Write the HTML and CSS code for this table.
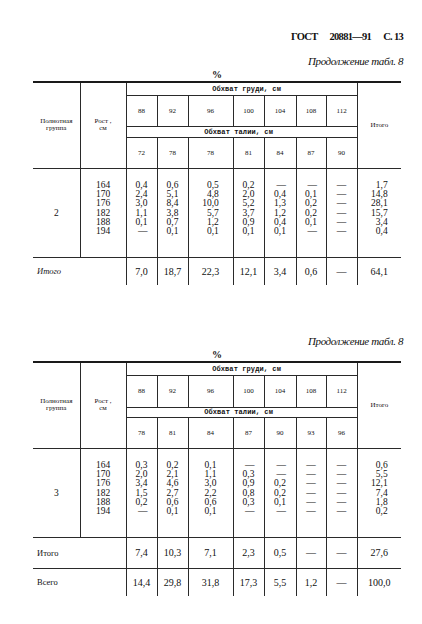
FILE: index.html
```html
<!DOCTYPE html>
<html lang="ru">
<head>
<meta charset="utf-8">
<title>ГОСТ 20881—91 С. 13</title>
<link rel="stylesheet" href="styles.css">
</head>
<body>
<div class="page">
  <div class="gost"><span>ГОСТ</span><span>20881—91</span><span>С. 13</span></div>
  <div class="cont">Продолжение табл. 8</div>
  <div class="pct">%</div>
  <table class="t t1">
    <colgroup>
      <col class="c47"><col class="c46"><col class="c31"><col class="c31"><col class="c45"><col class="c31"><col class="c32"><col class="c30"><col class="c31"><col class="c44">
    </colgroup>
    <tr class="hd ra">
      <td class="first lbl" rowspan="4">Полнотная<br>группа</td>
      <td class="lbl" rowspan="4">Рост ,<br>см</td>
      <td class="sp sp-b" colspan="7">Обхват груди, см</td>
      <td class="lbl" rowspan="4">Итого</td>
    </tr>
    <tr class="hd rb">
      <td class="hn">88</td><td class="hn">92</td><td class="hn">96</td><td class="hn">100</td><td class="hn">104</td><td class="hn">108</td><td class="hn">112</td>
    </tr>
    <tr class="hd rc">
      <td class="sp sp-w" colspan="7">Обхват талии, см</td>
    </tr>
    <tr class="hd rd">
      <td class="hn">72</td><td class="hn">78</td><td class="hn">78</td><td class="hn">81</td><td class="hn">84</td><td class="hn">87</td><td class="hn">90</td>
    </tr>
    <tr class="dt re">
      <td class="first grp">2</td>
      <td class="num"><div class="v">164<br>170<br>176<br>182<br>188<br>194</div></td>
      <td class="num"><div class="v">0,4<br>2,4<br>3,0<br>1,1<br>0,1<br>—</div></td>
      <td class="num"><div class="v">0,6<br>5,1<br>8,4<br>3,8<br>0,7<br>0,1</div></td>
      <td class="num"><div class="v">0,5<br>4,8<br>10,0<br>5,7<br>1,2<br>0,1</div></td>
      <td class="num"><div class="v">0,2<br>2,0<br>5,2<br>3,7<br>0,9<br>0,1</div></td>
      <td class="num"><div class="v">—<br>0,4<br>1,3<br>1,2<br>0,4<br>0,1</div></td>
      <td class="num"><div class="v">—<br>0,1<br>0,2<br>0,2<br>0,1<br>—</div></td>
      <td class="num"><div class="v">—<br>—<br>—<br>—<br>—<br>—</div></td>
      <td class="num"><div class="v">1,7<br>14,8<br>28,1<br>15,7<br>3,4<br>0,4</div></td>
    </tr>
    <tr class="tot rf">
      <td class="first tl it" colspan="2">Итого</td>
      <td class="tn">7,0</td><td class="tn">18,7</td><td class="tn">22,3</td><td class="tn">12,1</td><td class="tn">3,4</td><td class="tn">0,6</td><td class="tn">—</td><td class="tn">64,1</td>
    </tr>
  </table>

  <div class="cont second">Продолжение табл. 8</div>
  <div class="pct">%</div>
  <table class="t t2">
    <colgroup>
      <col class="c47"><col class="c46"><col class="c31"><col class="c31"><col class="c45"><col class="c31"><col class="c32"><col class="c30"><col class="c31"><col class="c44">
    </colgroup>
    <tr class="hd ra">
      <td class="first lbl" rowspan="4">Полнотная<br>группа</td>
      <td class="lbl" rowspan="4">Рост ,<br>см</td>
      <td class="sp sp-b" colspan="7">Обхват груди, см</td>
      <td class="lbl" rowspan="4">Итого</td>
    </tr>
    <tr class="hd rb2">
      <td class="hn">88</td><td class="hn">92</td><td class="hn">96</td><td class="hn">100</td><td class="hn">104</td><td class="hn">108</td><td class="hn">112</td>
    </tr>
    <tr class="hd rc2">
      <td class="sp sp-w" colspan="7">Обхват талии, см</td>
    </tr>
    <tr class="hd rd">
      <td class="hn">78</td><td class="hn">81</td><td class="hn">84</td><td class="hn">87</td><td class="hn">90</td><td class="hn">93</td><td class="hn">96</td>
    </tr>
    <tr class="dt re">
      <td class="first grp">3</td>
      <td class="num"><div class="v">164<br>170<br>176<br>182<br>188<br>194</div></td>
      <td class="num"><div class="v">0,3<br>2,0<br>3,4<br>1,5<br>0,2<br>—</div></td>
      <td class="num"><div class="v">0,2<br>2,1<br>4,6<br>2,7<br>0,6<br>0,1</div></td>
      <td class="num"><div class="v">0,1<br>1,1<br>3,0<br>2,2<br>0,6<br>0,1</div></td>
      <td class="num"><div class="v">—<br>0,3<br>0,9<br>0,8<br>0,3<br>—</div></td>
      <td class="num"><div class="v">—<br>—<br>0,2<br>0,2<br>0,1<br>—</div></td>
      <td class="num"><div class="v">—<br>—<br>—<br>—<br>—<br>—</div></td>
      <td class="num"><div class="v">—<br>—<br>—<br>—<br>—<br>—</div></td>
      <td class="num"><div class="v">0,6<br>5,5<br>12,1<br>7,4<br>1,8<br>0,2</div></td>
    </tr>
    <tr class="tot dt rg">
      <td class="first tl" colspan="2">Итого</td>
      <td class="tn">7,4</td><td class="tn">10,3</td><td class="tn">7,1</td><td class="tn">2,3</td><td class="tn">0,5</td><td class="tn">—</td><td class="tn">—</td><td class="tn">27,6</td>
    </tr>
    <tr class="tot rf">
      <td class="first tl" colspan="2">Всего</td>
      <td class="tn">14,4</td><td class="tn">29,8</td><td class="tn">31,8</td><td class="tn">17,3</td><td class="tn">5,5</td><td class="tn">1,2</td><td class="tn">—</td><td class="tn">100,0</td>
    </tr>
  </table>
</div>
</body>
</html>
```

FILE: styles.css
```css
body {
  margin: 0;
  background: #ffffff;
  color: #111111;
  font-family: "Liberation Serif", "Times New Roman", serif;
}

.page {
  width: 368px;
  margin-left: 33px;
  padding-top: 31px;
}

.gost {
  text-align: right;
  font-weight: bold;
  font-size: 10.5px;
  line-height: 12px;
  letter-spacing: -0.7px;
  margin-right: -2px;
}

.gost span + span {
  margin-left: 12px;
}

.cont {
  text-align: right;
  font-style: italic;
  font-size: 11px;
  line-height: 13px;
  letter-spacing: -0.4px;
  margin-top: 12px;
  margin-right: -2px;
}

.cont.second {
  margin-top: 50px;
}

.pct {
  text-align: center;
  font-weight: bold;
  font-size: 10px;
  line-height: 12px;
  margin-top: 1px;
}

table.t {
  border-collapse: collapse;
  table-layout: fixed;
  width: 368px;
  border-top: 2px solid #1a1a1a;
}

.c47 { width: 47px; }
.c46 { width: 46px; }
.c45 { width: 45px; }
.c44 { width: 44px; }
.c32 { width: 32px; }
.c31 { width: 31px; }
.c30 { width: 30px; }

td {
  padding: 0;
  border-left: 1px solid #2a2a2a;
  text-align: center;
  vertical-align: middle;
}

td.first {
  border-left: none;
}

tr.hd td,
tr.dt td {
  border-bottom: 1px solid #2a2a2a;
}

tr.ra { height: 13px; }
tr.rb { height: 31px; }
tr.rb2 { height: 32px; }
tr.rc { height: 11px; }
tr.rc2 { height: 10px; }
tr.rd { height: 31px; }
tr.re { height: 89px; }
tr.rf { height: 28px; }
tr.rg { height: 31px; }

.lbl {
  font-size: 7px;
  line-height: 7.5px;
}

.sp {
  font-family: "Liberation Mono", "DejaVu Sans Mono", monospace;
  font-weight: bold;
  font-size: 7px;
  line-height: 8px;
  letter-spacing: 0.1px;
}

.sp-b {
  padding-left: 10px;
}

.sp-w {
  padding-right: 6px;
}

.hn {
  font-size: 7px;
  line-height: 8px;
}

.grp {
  font-size: 9.5px;
}

td.num {
  vertical-align: top;
  padding-top: 12px;
}

.v {
  display: inline-block;
  text-align: right;
  font-size: 9.5px;
  line-height: 9.35px;
}

.tn {
  font-size: 10px;
}

.tl {
  text-align: left;
  padding-left: 4px;
  font-size: 8.5px;
}

.tl.it {
  font-style: italic;
}
```
